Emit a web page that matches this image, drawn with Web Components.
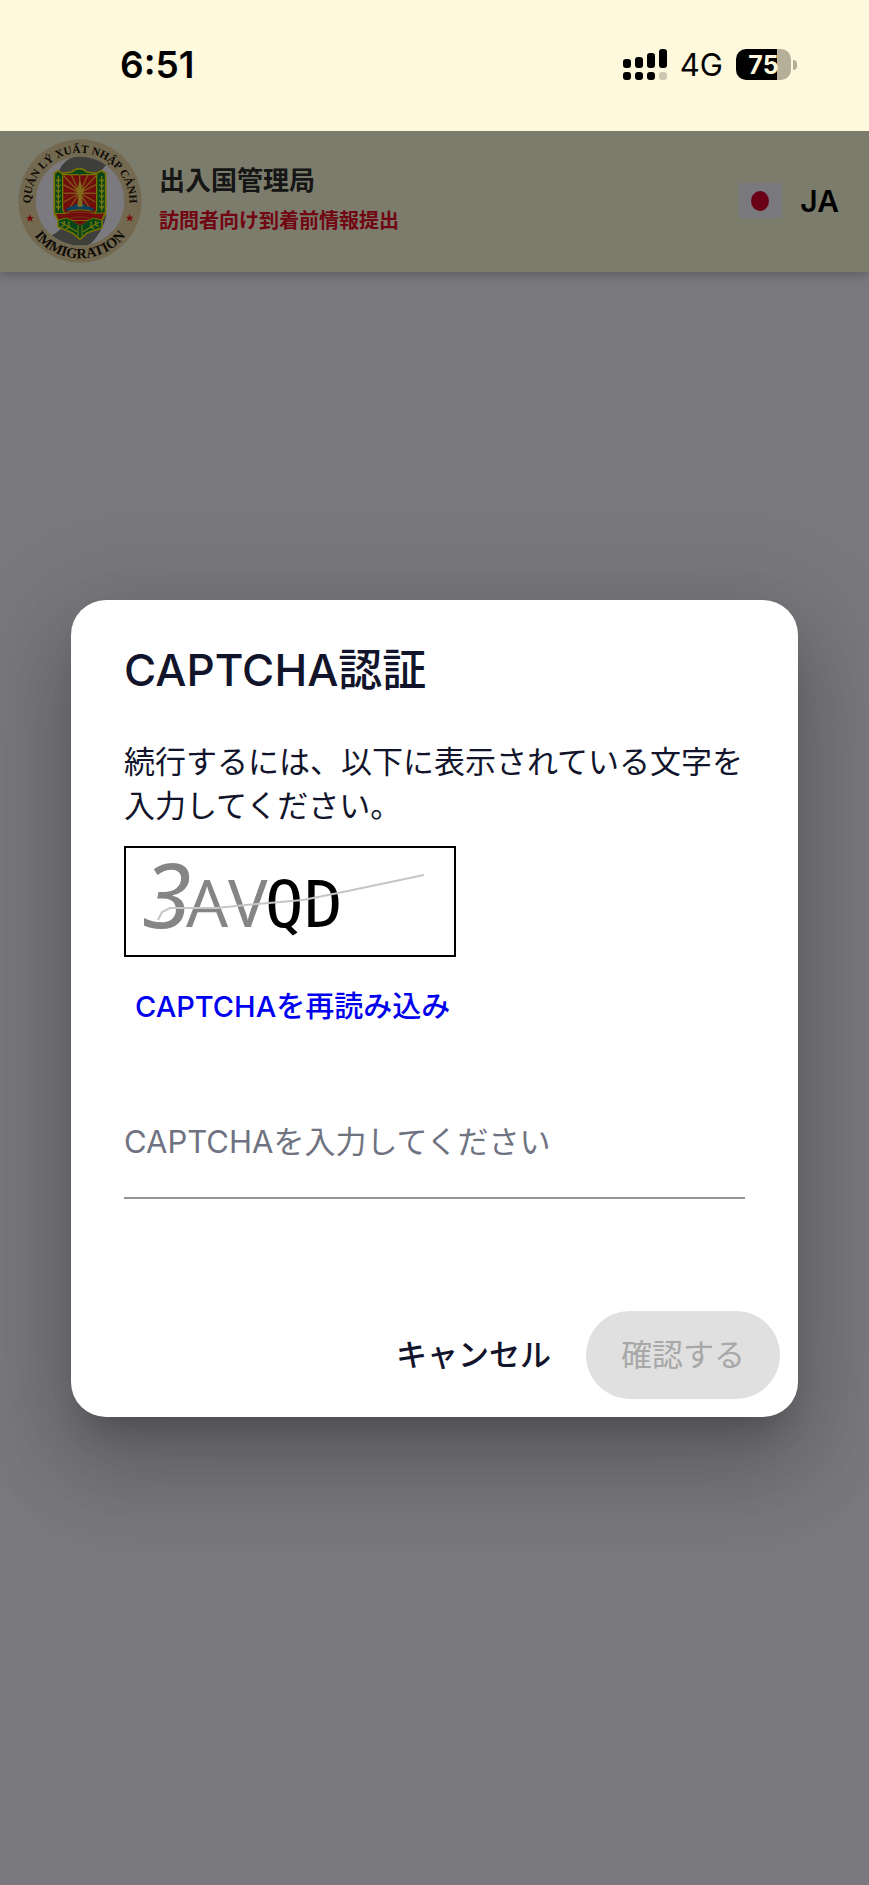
<!DOCTYPE html>
<html lang="ja">
<head>
<meta charset="utf-8">
<meta name="viewport" content="width=device-width, initial-scale=1">
<title>出入国管理局</title>
<style>
  body {
    margin: 0;
    min-height: 100vh;
    display: flex;
    flex-direction: column;
    font-family: Inter, "Noto Sans CJK JP", sans-serif;
    color: #11142a;
    background: #f3f1fa;
  }
</style>
</head>
<body>
  <status-bar time="6:51" network="4G" battery="75"></status-bar>
  <app-shell>
    <app-header slot="header">
      <immigration-emblem slot="logo"></immigration-emblem>
      <span slot="title">出入国管理局</span>
      <span slot="subtitle">訪問者向け到着前情報提出</span>
      <language-button slot="language">JA</language-button>
    </app-header>
    <captcha-dialog>
      <span slot="title">CAPTCHA認証</span>
      <span slot="message">続行するには、以下に表示されている文字を入力してください。</span>
      <captcha-image slot="image"></captcha-image>
    </captcha-dialog>
  </app-shell>

<script>
(function () {
  function define(name, html) {
    var template = document.createElement('template');
    template.innerHTML = html;

    window.customElements.define(name, class extends HTMLElement {
      constructor() {
        super();
        this.attachShadow({ mode: 'open' });
        this.shadowRoot.appendChild(template.content.cloneNode(true));
      }

      connectedCallback() {
        // copy attributes into the matching [data-text] nodes
        this.shadowRoot.querySelectorAll('[data-text]').forEach(node => {
          node.textContent = this.getAttribute(node.dataset.text);
        });
      }
    });
  }

  define('status-bar', `
    <style>
      :host {
        display: flex;
        align-items: center;
        justify-content: space-between;
        box-sizing: border-box;
        height: 131px;
        padding: 0 72px 2px 120px;
        background: #fef8dc;
        color: #000;
      }
      .time { font-size: 37px; font-weight: 600; }
      .icons { display: flex; align-items: center; gap: 13px; }
      .network { font-size: 31px; }
      .battery { display: flex; align-items: center; gap: 2px; }
      .level {
        display: flex;
        align-items: center;
        justify-content: center;
        width: 55px;
        height: 31px;
        border-radius: 10px;
        background: linear-gradient(90deg, #000 75%, #b5af9a 75%);
        color: #fef8dc;
        font-size: 25px;
        font-weight: 700;
      }
      .cap { width: 4px; height: 10px; border-radius: 0 5px 5px 0; background: #b5af9a; }
    </style>
    <span class="time" data-text="time"></span>
    <div class="icons">
      <svg width="44" height="32" viewBox="0 0 44 32" aria-hidden="true">
        <rect x="0" y="10" width="8" height="9" rx="3"/>
        <rect x="12" y="8" width="8" height="11" rx="3"/>
        <rect x="24" y="4" width="8" height="15" rx="3"/>
        <rect x="36" y="0" width="8" height="19" rx="3"/>
        <rect x="0" y="23" width="8" height="8" rx="3"/>
        <rect x="12" y="23" width="8" height="8" rx="3"/>
        <rect x="24" y="23" width="8" height="8" rx="3"/>
        <rect x="36" y="23" width="8" height="8" rx="3" fill="#cdc8b1"/>
      </svg>
      <span class="network" data-text="network"></span>
      <div class="battery">
        <span class="level" data-text="battery"></span>
        <span class="cap"></span>
      </div>
    </div>
  `);

  define('app-shell', `
    <style>
      :host { position: relative; display: flex; flex-direction: column; flex: 1; overflow: hidden; }
      .backdrop {
        position: absolute;
        inset: 0;
        display: flex;
        align-items: center;
        box-sizing: border-box;
        padding: 0 71px;
        background: rgba(0, 0, 0, 0.5);
      }
    </style>
    <slot name="header"></slot>
    <div class="backdrop"><slot></slot></div>
  `);

  define('app-header', `
    <style>
      :host {
        display: flex;
        align-items: center;
        gap: 17px;
        box-sizing: border-box;
        height: 141px;
        padding: 0 30px 2px 18px;
        background: #f9f9d9;
        box-shadow: 0 4px 9px rgba(0, 0, 0, 0.2);
      }
      .titles { flex: 1; display: flex; flex-direction: column; gap: 4px; }
      h1, p { margin: 0; line-height: 36px; }
      h1 { font-size: 26px; font-weight: 600; color: #2c2c2c; }
      p { font-size: 20px; font-weight: 700; color: #e40a26; }
    </style>
    <slot name="logo"></slot>
    <div class="titles">
      <h1><slot name="title"></slot></h1>
      <p><slot name="subtitle"></slot></p>
    </div>
    <slot name="language"></slot>
  `);

  define('language-button', `
    <style>
      :host { display: block; }
      button {
        display: flex;
        align-items: center;
        gap: 18px;
        padding: 0;
        border: 0;
        background: none;
        color: #000;
        font: 600 30px Inter, sans-serif;
      }
      svg { display: block; }
    </style>
    <button type="button">
      <svg width="43" height="35" viewBox="0 0 43 35" aria-hidden="true">
        <rect width="43" height="35" fill="#f3f0fa"/>
        <ellipse cx="21" cy="18" rx="9" ry="10" fill="#d4002c"/>
      </svg>
      <slot></slot>
    </button>
  `);

  define('immigration-emblem', `
    <style>
      :host { display: block; flex: none; }
      svg { display: block; }
      text { font-family: "Liberation Serif", serif; font-weight: 700; fill: #1a1408; }
    </style>
    <svg width="124" height="124" viewBox="54 43 372 372" role="img" aria-label="QUẢN LÝ XUẤT NHẬP CẢNH IMMIGRATION">
      <defs>
        <path id="top" d="M93 250A148 148 0 1 1 387 250"/>
        <path id="bottom" d="M68 229A172 172 0 0 0 412 229"/>
        <clipPath id="disc"><circle cx="240" cy="229" r="133"/></clipPath>
      </defs>
      <circle cx="240" cy="229" r="185" fill="#e6d3a2"/>
      <circle cx="240" cy="229" r="133" fill="#f6f4ff"/>
      <g clip-path="url(#disc)" fill="#7c7c74">
        <path d="M176 140Q188 104 240 90Q300 90 318 122Q290 150 270 200L200 200Z"/>
        <path d="M150 334Q190 318 214 270L320 270Q306 330 262 366L180 366Z"/>
      </g>
      <text font-size="34" text-anchor="middle"><textPath href="#top" startOffset="50%">QUẢN LÝ XUẤT NHẬP CẢNH</textPath></text>
      <text font-size="43" text-anchor="middle"><textPath href="#bottom" startOffset="50%">IMMIGRATION</textPath></text>
      <g fill="#ee1c1c">
        <path id="star" d="M90 268L93 277L101 277L95 283L98 292L90 286L82 292L85 283L79 277L87 277Z"/>
        <use href="#star" x="299" y="-1"/>
      </g>
      <!-- shield -->
      <path d="M163 146L174 138L186 146L216 142Q226 132 238 132Q250 132 260 142L290 146L304 138L317 146V268L306 284V310L262 324L240 344L216 324L174 306V284L163 268Z" fill="#0d8a30" stroke="#f4e400" stroke-width="5"/>
      <path d="M188 150H290V256Q284 276 240 300Q196 276 188 256Z" fill="#e51b1b" stroke="#f4e400" stroke-width="4"/>
      <path d="M239 205L192 154M239 205L214 150M239 205V150M239 205L264 150M239 205L288 154M239 205L190 180M239 205L288 180M239 205L190 206M239 205L288 206M239 205L192 232M239 205L286 232M239 205L210 248M239 205L268 248" stroke="#ffb02c" stroke-width="4"/>
      <path d="M230 142Q239 134 248 142L239 152Z" fill="#14923a"/>
      <path d="M196 258Q202 246 220 244L230 236H250L258 244Q276 246 284 258Z" fill="#1681b8"/>
      <path d="M232 246L235 210L226 190L234 194L236 176L240 168L244 178L246 194L254 188L246 212L248 246Z" fill="#ffd636"/>
      <path d="M166 266Q204 270 210 258Q240 252 270 258Q276 270 314 264L306 286L280 280L262 288H218L200 280L174 286Z" fill="#e51b1b" stroke="#f4e400" stroke-width="3"/>
      <path d="M194 268Q240 256 288 268M212 280Q240 272 268 280" fill="none" stroke="#f08a20" stroke-width="2"/>
      <path d="M218 289H262L240 302Z" fill="#e51b1b"/>
      <g fill="none" stroke="#e4ec18" stroke-width="4">
        <path d="M168 164L175 172L182 164M168 180L175 188L182 180M168 196L175 204L182 196M168 212L175 220L182 212M168 228L175 236L182 228M168 244L175 252L182 244M175 154V258"/>
        <path d="M298 164L305 172L312 164M298 180L305 188L312 180M298 196L305 204L312 196M298 212L305 220L312 212M298 228L305 236L312 228M298 244L305 252L312 244M305 154V258"/>
        <path d="M182 292L232 322M192 288L194 300L184 306M206 290L208 308L198 312M298 292L248 322M288 288L286 300L296 306M274 290L272 308L282 312"/>
        <path d="M234 302V336M246 302V336" stroke-width="3"/>
      </g>
    </svg>
  `);

  define('captcha-image', `
    <style>
      :host { display: block; width: 332px; box-sizing: border-box; border: 2px solid #000; background: #fff; }
      svg { display: block; width: 100%; overflow: visible; }
      .light { font-family: "Noto Sans", sans-serif; fill: #858585; }
      .lead { font-style: italic; }
      .dark { font-family: "DejaVu Sans Mono", monospace; fill: #000; }
    </style>
    <svg viewBox="2 2 328 107" role="img" aria-label="CAPTCHA">
      <text class="light lead" x="18" y="82" font-size="90">3</text>
      <text class="light" x="62" y="81" font-size="66">A</text>
      <text class="light" x="104" y="81" font-size="66">V</text>
      <text class="dark" x="141" y="81" font-size="64">Q</text>
      <text class="dark" x="180" y="81" font-size="64">D</text>
      <path d="M34 74L38 66L46 62H93L133 58L179 54L219 46L300 29" fill="none" stroke="#c6c6c6" stroke-width="2"/>
    </svg>
  `);

  define('captcha-dialog', `
    <style>
      :host { display: block; flex: 1; }
      section {
        border-radius: 35px;
        background: #fff;
        box-shadow: 0 24px 33px -15px rgba(0, 0, 0, 0.2),
          0 53px 84px 7px rgba(0, 0, 0, 0.14),
          0 20px 102px 18px rgba(0, 0, 0, 0.12);
      }
      .content { display: flex; flex-direction: column; align-items: flex-start; padding: 38px 53px 0; }
      h2 { margin: 0 0 38px; font-size: 44px; line-height: 64px; font-weight: 500; }
      p { margin: 0 0 18px; font-size: 31px; line-height: 44px; }
      button { border: 0; font-family: inherit; color: inherit; }
      .reload {
        margin: 18px 0 56px;
        padding: 0 11px;
        background: none;
        color: #0000f0;
        font-size: 29px;
        line-height: 64px;
        font-weight: 500;
      }
      input {
        width: 100%;
        height: 104px;
        box-sizing: border-box;
        padding: 0 0 8px;
        border: 0;
        border-bottom: 2px solid #949494;
        border-radius: 0;
        outline: 0;
        background: none;
        color: inherit;
        font-family: inherit;
        font-size: 31px;
      }
      input::placeholder { color: #6f7280; opacity: 1; }
      .actions { display: flex; justify-content: flex-end; margin-top: 112px; padding: 0 18px 18px; }
      .actions button { height: 88px; padding: 0 35px 4px; border-radius: 44px; background: none; font-size: 31px; }
      .actions .cancel { font-weight: 500; }
      .actions .confirm { background: #e0e0e0; color: #a8a8a8; }
    </style>
    <section role="dialog" aria-modal="true" aria-labelledby="title">
      <div class="content">
        <h2 id="title"><slot name="title"></slot></h2>
        <p><slot name="message"></slot></p>
        <slot name="image"></slot>
        <button class="reload" type="button">CAPTCHAを再読み込み</button>
        <input type="text" aria-label="CAPTCHA" placeholder="CAPTCHAを入力してください">
      </div>
      <div class="actions">
        <button class="cancel" type="button">キャンセル</button>
        <button class="confirm" type="button" disabled>確認する</button>
      </div>
    </section>
  `);
})();
</script>
</body>
</html>
